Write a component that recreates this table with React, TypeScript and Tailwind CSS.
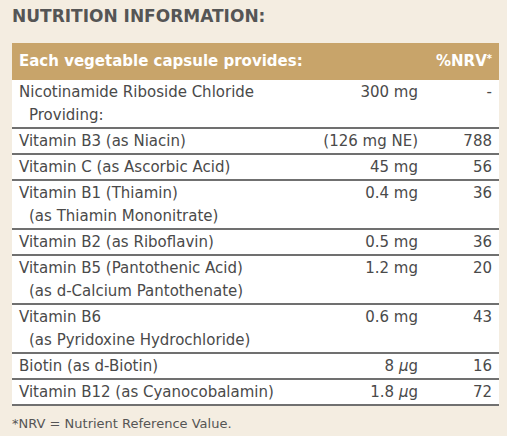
import React from "react";

type Row = { name: string; sub?: string; amt: React.ReactNode; nrv: string };

const rows: Row[] = [
  { name: "Nicotinamide Riboside Chloride", sub: "Providing:", amt: "300 mg", nrv: "-" },
  { name: "Vitamin B3 (as Niacin)", amt: "(126 mg NE)", nrv: "788" },
  { name: "Vitamin C (as Ascorbic Acid)", amt: "45 mg", nrv: "56" },
  { name: "Vitamin B1 (Thiamin)", sub: "(as Thiamin Mononitrate)", amt: "0.4 mg", nrv: "36" },
  { name: "Vitamin B2 (as Riboflavin)", amt: "0.5 mg", nrv: "36" },
  { name: "Vitamin B5 (Pantothenic Acid)", sub: "(as d-Calcium Pantothenate)", amt: "1.2 mg", nrv: "20" },
  { name: "Vitamin B6", sub: "(as Pyridoxine Hydrochloride)", amt: "0.6 mg", nrv: "43" },
  {
    name: "Biotin (as d-Biotin)",
    amt: (
      <>
        8 <span className="italic">µ</span>g
      </>
    ),
    nrv: "16",
  },
  {
    name: "Vitamin B12 (as Cyanocobalamin)",
    amt: (
      <>
        1.8 <span className="italic">µ</span>g
      </>
    ),
    nrv: "72",
  },
];

export default function App() {
  return (
    <div
      className="w-[507px] h-[436px] bg-[#f4ede1] text-[#4a4a4a] overflow-hidden px-[12px] pt-[5px]"
      style={{ fontFamily: '"DejaVu Sans", sans-serif' }}
    >
      <h1 className="text-[17px] font-bold leading-[22px] text-[#555]">
        NUTRITION INFORMATION:
      </h1>
      <table className="mt-[16px] w-[487px] border-collapse text-[15px] leading-[23px]">
        <thead>
          <tr className="bg-[#c8a46a] text-white">
            <th className="h-[37px] pl-[7px] text-left font-semibold w-[293px]">Each vegetable capsule provides:</th>
            <th className="w-[120px]"></th>
            <th className="pr-[7px] text-right font-semibold">
              %NRV<span className="text-[10px] relative top-[-4px]">*</span>
            </th>
          </tr>
        </thead>
        <tbody className="bg-white">
          {rows.map((r, i) => (
            <tr key={i} className="border-b-2 border-[#707070] align-top">
              <td className="pt-[1px] pl-[7px]">
                <div>{r.name}</div>
                {r.sub && <div className="pl-[10px]">{r.sub}</div>}
              </td>
              <td className="pt-[1px] pr-[7px] text-right">{r.amt}</td>
              <td className="pt-[1px] pr-[7px] text-right">{r.nrv}</td>
            </tr>
          ))}
        </tbody>
      </table>
      <p className="mt-[10px] text-[13px] leading-[16px] text-[#555]">*NRV = Nutrient Reference Value.</p>
    </div>
  );
}
